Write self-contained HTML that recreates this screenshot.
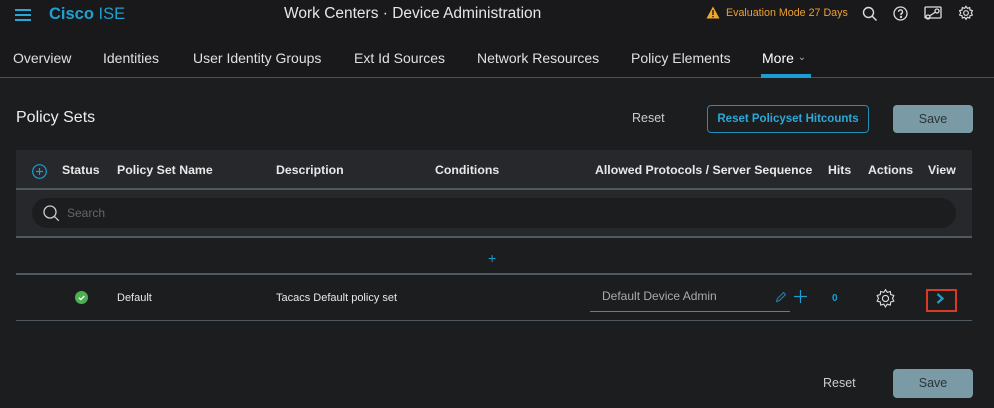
<!DOCTYPE html>
<html><head><style>
*{margin:0;padding:0;box-sizing:border-box}
body{width:994px;height:408px;background:#1c1d1f;font-family:"Liberation Sans",sans-serif;color:#e6e6e6;position:relative;overflow:hidden}
.a{position:absolute;white-space:nowrap}
.top{position:absolute;left:0;top:0;width:994px;height:78px;background:#19191b;border-bottom:1px solid #4a5056}
.nav{font-size:14px;color:#e0e0e0;top:50px}
.th{font-size:12.3px;font-weight:bold;color:#e8e8e8;top:163px}
.line{position:absolute;left:16px;width:956px;height:2px;background:#505860}
.td{font-size:11px;color:#e8e8e8;top:292px}
</style></head><body>
<div class="top"></div>
<div class="a" style="left:15px;top:9px;width:16px;height:12px">
<div style="height:2px;background:#27a7d6;margin-bottom:3px"></div><div style="height:2px;background:#27a7d6;margin-bottom:3px"></div><div style="height:2px;background:#27a7d6"></div></div>
<div class="a" style="left:49px;top:5px;font-size:16.5px;color:#1fa0cf"><b>Cisco</b> ISE</div>
<div class="a" style="left:284px;top:5px;font-size:15.5px;color:#e6e6e6">Work Centers · Device Administration</div>
<svg class="a" style="left:706px;top:6px" width="14" height="13" viewBox="0 0 14 13"><path d="M7 0.5L13.5 12.5H0.5Z" fill="#f5a623"/><rect x="6.3" y="4" width="1.4" height="5" fill="#19191b"/><rect x="6.3" y="10" width="1.4" height="1.4" fill="#19191b"/></svg>
<div class="a" style="left:726px;top:7px;font-size:10.7px;color:#f0a030">Evaluation Mode 27 Days</div>
<svg class="a" style="left:862px;top:6px" width="16" height="16" viewBox="0 0 16 16" fill="none" stroke="#ddd" stroke-width="1.4"><circle cx="6.5" cy="6.5" r="5"/><path d="M10 10l4.5 4.5"/></svg>
<svg class="a" style="left:893px;top:6px" width="15" height="15" viewBox="0 0 15 15" fill="none" stroke="#ddd" stroke-width="1.3"><circle cx="7.5" cy="7.5" r="6.5"/><path d="M5.5 5.8a2 2 0 1 1 2.5 2v1.4"/><circle cx="8" cy="11" r=".5" fill="#ddd"/></svg>
<svg class="a" style="left:924px;top:6px" width="18" height="15" viewBox="0 0 18 15" fill="none" stroke="#ddd" stroke-width="1.3"><rect x="1" y="1" width="16" height="11" rx="1"/><circle cx="4" cy="11" r="2"/><circle cx="13" cy="5" r="2"/><path d="M5.5 10l6-4"/></svg>
<svg class="a" style="left:958px;top:5px" width="16" height="16" viewBox="0 0 24 24" fill="none" stroke="#ddd" stroke-width="1.8"><circle cx="12" cy="12" r="3.5"/><path d="M12 2l2 3 3.5-1 .5 3.5 3.5 1-1.5 3.5 1.5 3-3.5 1-.5 3.5-3.5-1-2 3-2-3-3.5 1-.5-3.5-3.5-1 1.5-3-1.5-3.5 3.5-1 .5-3.5 3.5 1z"/></svg>
<div class="a nav" style="left:13px">Overview</div>
<div class="a nav" style="left:103px">Identities</div>
<div class="a nav" style="left:193px">User Identity Groups</div>
<div class="a nav" style="left:354px">Ext Id Sources</div>
<div class="a nav" style="left:477px">Network Resources</div>
<div class="a nav" style="left:631px">Policy Elements</div>
<div class="a nav" style="left:762px;color:#fff">More <span style="font-size:10px;color:#aaa;position:relative;top:-3px">&#8964;</span></div>
<div class="a" style="left:761px;top:74px;width:50px;height:4px;background:#1c9cd0"></div>
<div class="a" style="left:16px;top:109px;font-size:16px;color:#eee">Policy Sets</div>
<div class="a" style="left:632px;top:111px;font-size:12.5px;color:#ccc">Reset</div>
<div class="a" style="left:707px;top:105px;width:162px;height:28px;border:1px solid #1f8fb8;border-radius:4px;color:#2aa8d8;font-size:11.5px;font-weight:bold;text-align:center;line-height:26px">Reset Policyset Hitcounts</div>
<div class="a" style="left:893px;top:105px;width:80px;height:28px;background:#7a9ba5;border-radius:4px;color:#2b3338;font-size:12.5px;text-align:center;line-height:28px">Save</div>
<div class="a" style="left:16px;top:150px;width:956px;height:87px;background:#26282b"></div>
<svg class="a" style="left:32px;top:164px" width="15" height="15" viewBox="0 0 15 15" fill="none" stroke="#1c9cd0" stroke-width="1.2"><circle cx="7.5" cy="7.5" r="6.8"/><path d="M7.5 4v7M4 7.5h7"/></svg>
<div class="a th" style="left:62px">Status</div>
<div class="a th" style="left:117px">Policy Set Name</div>
<div class="a th" style="left:276px">Description</div>
<div class="a th" style="left:435px">Conditions</div>
<div class="a th" style="left:595px">Allowed Protocols / Server Sequence</div>
<div class="a th" style="left:828px">Hits</div>
<div class="a th" style="left:868px">Actions</div>
<div class="a th" style="left:928px">View</div>
<div class="line" style="top:188px"></div>
<div class="a" style="left:32px;top:198px;width:924px;height:30px;background:#1c1d1f;border-radius:15px"></div>
<svg class="a" style="left:43px;top:205px" width="17" height="17" viewBox="0 0 17 17" fill="none" stroke="#ccc" stroke-width="1.3"><circle cx="7" cy="7" r="6"/><path d="M11.3 11.3l4.5 4.5"/></svg>
<div class="a" style="left:67px;top:206px;font-size:12px;color:#666">Search</div>
<div class="line" style="top:236px"></div>
<div class="a" style="left:488px;top:250px;font-size:14px;color:#1c9cd0">+</div>
<div class="line" style="top:273px"></div>
<svg class="a" style="left:75px;top:291px" width="13" height="13" viewBox="0 0 13 13"><circle cx="6.5" cy="6.5" r="6.5" fill="#4cb050"/><path d="M3.8 6.7l2 1.9 3.6-3.6" stroke="#fff" stroke-width="1.3" fill="none"/></svg>
<div class="a td" style="left:117px">Default</div>
<div class="a td" style="left:276px">Tacacs Default policy set</div>
<div class="a" style="left:602px;top:289px;font-size:12px;color:#aaa">Default Device Admin</div>
<div class="a" style="left:590px;top:311px;width:200px;height:1px;background:#777"></div>
<svg class="a" style="left:775px;top:291px" width="12" height="12" viewBox="0 0 12 12" fill="none" stroke="#1c80b0" stroke-width="1.1"><path d="M1.5 10.5l1-3 6-6 2 2-6 6z"/></svg>
<svg class="a" style="left:794px;top:290px" width="13" height="13" viewBox="0 0 13 13" stroke="#1c9cd0" stroke-width="1.2"><path d="M6.5 0v13M0 6.5h13"/></svg>
<div class="a" style="left:832px;top:293px;font-size:10px;color:#1c9cd0;font-weight:bold">0</div>
<svg class="a" style="left:875px;top:288px" width="21" height="21" viewBox="0 0 24 24" fill="none" stroke="#ddd" stroke-width="1.3"><circle cx="12" cy="12" r="3.5"/><path d="M12 2l2 3 3.5-1 .5 3.5 3.5 1-1.5 3.5 1.5 3-3.5 1-.5 3.5-3.5-1-2 3-2-3-3.5 1-.5-3.5-3.5-1 1.5-3-1.5-3.5 3.5-1 .5-3.5 3.5 1z"/></svg>
<div class="a" style="left:926px;top:289px;width:31px;height:23px;border:2px solid #d83a25"></div>
<svg class="a" style="left:936px;top:293px" width="9" height="11" viewBox="0 0 9 11"><path d="M1.5 1l5 4.5-5 4.5" stroke="#1c9cd0" stroke-width="2.3" fill="none"/></svg>
<div class="line" style="top:320px;height:1px"></div>
<div class="a" style="left:823px;top:376px;font-size:12.5px;color:#ccc">Reset</div>
<div class="a" style="left:893px;top:369px;width:80px;height:29px;background:#7a9ba5;border-radius:4px;color:#2b3338;font-size:12.5px;text-align:center;line-height:29px">Save</div>
</body></html>
